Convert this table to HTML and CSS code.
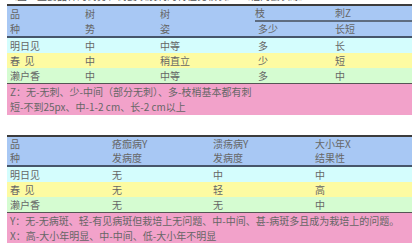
FILE: index.html
```html
<!DOCTYPE html>
<html lang="zh-CN">
<head>
<meta charset="utf-8">
<title>品种特性</title>
<link rel="stylesheet" href="styles.css">
</head>
<body>
<div class="page">
  <div class="caption"><span class="cap-a">（图：主要品种的树势、树姿以及刺的特性比较表）</span><span class="cap-b">（福冈县农综）</span></div>
  <table class="grid t1">
    <colgroup><col class="c1a"><col class="c1b"><col class="c1c"><col class="c1d"><col class="c1e"></colgroup>
    <thead>
      <tr class="hr1"><td>品</td><td>树</td><td>树</td><td class="split">枝</td><td class="split">刺Z</td></tr>
      <tr class="hr2"><td>种</td><td>势</td><td>姿</td><td>多少</td><td>长短</td></tr>
    </thead>
    <tbody>
      <tr class="cyan"><td>明日见</td><td>中</td><td>中等</td><td>多</td><td>长</td></tr>
      <tr class="yellow"><td>春&nbsp;&nbsp;见</td><td>中</td><td>稍直立</td><td>少</td><td>短</td></tr>
      <tr class="green"><td>濑户香</td><td>中</td><td>中等</td><td>多</td><td>中</td></tr>
      <tr class="note"><td colspan="5"><div>Z：无-无刺、少-中间（部分无刺）、多-枝梢基本都有刺</div><div>短-不到25px、中-1-2 cm、长-2 cm以上</div></td></tr>
    </tbody>
  </table>
  <table class="grid t2">
    <colgroup><col class="c2a"><col class="c2b"><col class="c2c"><col class="c2d"></colgroup>
    <thead>
      <tr class="hr1"><td>品</td><td>疮痂病Y</td><td>溃疡病Y</td><td>大小年X</td></tr>
      <tr class="hr2"><td>种</td><td>发病度</td><td>发病度</td><td>结果性</td></tr>
    </thead>
    <tbody>
      <tr class="cyan"><td>明日见</td><td>无</td><td>中</td><td>中</td></tr>
      <tr class="yellow"><td>春&nbsp;&nbsp;见</td><td>无</td><td>轻</td><td>高</td></tr>
      <tr class="green"><td>濑户香</td><td>无</td><td>无</td><td>中</td></tr>
      <tr class="note last"><td colspan="4"><div>Y：无-无病斑、轻-有见病斑但栽培上无问题、中-中间、甚-病斑多且成为栽培上的问题。</div><div>X：高-大小年明显、中-中间、低-大小年不明显</div></td></tr>
    </tbody>
  </table>
</div>
</body>
</html>
```

FILE: styles.css
```css
html, body {
  margin: 0;
  padding: 0;
  background: #ffffff;
}
body {
  font-family: "Noto Sans CJK SC", "Noto Sans", sans-serif;
  font-size: 10px;
  color: #666666;
}
.page {
  padding: 0 3px 0 7px;
  width: 405px;
}
.caption {
  height: 4px;
  overflow: hidden;
  display: flex;
  color: #555;
}
.caption span {
  display: block;
  line-height: 12px;
  margin-top: -10px;
  white-space: nowrap;
}
.cap-a { width: 233px; }
.grid {
  width: 405px;
  border-collapse: collapse;
  table-layout: fixed;
}
.grid td {
  padding: 0 0 0 3px;
  height: 15px;
  line-height: 15px;
  white-space: nowrap;
  vertical-align: middle;
}
.grid thead td {
  height: 14px;
  line-height: 14px;
}
.grid thead tr { background: #a8c8f4; }
.grid .hr1 td { border-top: 2px solid #3c3c3c; }
.grid .hr2 td { border-bottom: 2px solid #46556a; }
.t1 .hr1 td.split { border-bottom: 2px solid #5e6c80; }
.t1 .hr1 td.split:nth-child(4) { padding-left: 0; }
.cyan { background: #d4fdfd; }
.yellow { background: #fdfba2; }
.green { background: #d5fcd1; }
.note td {
  background: #f2a2ca;
  border-top: 1px solid #555;
  padding-top: 0;
  padding-bottom: 1px;
  height: auto;
  color: #666;
}
.note td div {
  line-height: 15px;
}
.note.last td { border-bottom: 2px solid #3c3c3c; }
.t1 { margin-bottom: 20px; }
.c1a { width: 75px; }
.c1b { width: 75px; }
.c1c { width: 98px; }
.c1d { width: 77px; }
.c1e { width: 80px; }
.c2a { width: 102px; }
.c2b { width: 101px; }
.c2c { width: 102px; }
.c2d { width: 100px; }
```
